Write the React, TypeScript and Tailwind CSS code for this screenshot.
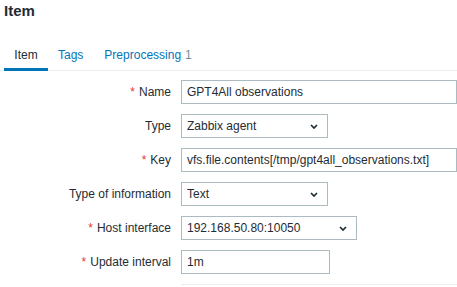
import React from 'react';

const Chevron = () => (
  <svg width="8" height="5" viewBox="0 0 8 5" className="shrink-0">
    <path d="M1 1l3 3 3-3" fill="none" stroke="#1f2c33" strokeWidth="1.7" />
  </svg>
);

const Label: React.FC<{ text: string; required?: boolean }> = ({ text, required }) => (
  <div className="w-[171px] shrink-0 text-right text-[12px] text-[#1f2c33]">
    {required && <span className="text-[#e33734] mr-[4px]">*</span>}
    {text}
  </div>
);

const Input: React.FC<{ value: string; width: string }> = ({ value, width }) => (
  <div className={`h-[24px] ${width} border border-[#acbbc2] bg-white flex items-center px-[5px] text-[12px] text-[#1f2c33] whitespace-nowrap`}>
    {value}
  </div>
);

const Select: React.FC<{ value: string; width: string }> = ({ value, width }) => (
  <div className={`h-[24px] ${width} border border-[#acbbc2] bg-white flex items-center justify-between pl-[5px] pr-[9px] text-[12px] text-[#1f2c33]`}>
    <span>{value}</span>
    <Chevron />
  </div>
);

const Row: React.FC<{ label: string; required?: boolean; children: React.ReactNode }> = ({ label, required, children }) => (
  <div className="flex items-center gap-[10px] h-[24px]">
    <Label text={label} required={required} />
    {children}
  </div>
);

export default function App() {
  return (
    <div className="w-[457px] h-[287px] overflow-hidden bg-white font-['Liberation_Sans',Arial,sans-serif]">
      <h1 className="pl-[4px] pt-[2px] text-[15px] font-bold text-[#1f2c33] leading-[18px]">Item</h1>
      <div className="mt-[26px] flex border-b border-[#ebeef0] h-[25px]">
        <div className="w-[44px] ml-[4px] text-center text-[12px] text-[#1f2c33] border-b-[3px] border-[#0275b8] -mb-[1px]">Item</div>
        <div className="ml-[10px] text-[12px] text-[#0275b8]">Tags</div>
        <div className="ml-[21px] text-[12px] text-[#0275b8]">
          Preprocessing<span className="text-[#768d99] ml-[4px]">1</span>
        </div>
      </div>
      <div className="pt-[9px] flex flex-col gap-[10px]">
        <Row label="Name" required>
          <Input value="GPT4All observations" width="w-[300px]" />
        </Row>
        <Row label="Type">
          <Select value="Zabbix agent" width="w-[147px]" />
        </Row>
        <Row label="Key" required>
          <Input value="vfs.file.contents[/tmp/gpt4all_observations.txt]" width="w-[300px]" />
        </Row>
        <Row label="Type of information">
          <Select value="Text" width="w-[147px]" />
        </Row>
        <Row label="Host interface" required>
          <Select value="192.168.50.80:10050" width="w-[176px]" />
        </Row>
        <Row label="Update interval" required>
          <Input value="1m" width="w-[149px]" />
        </Row>
        <div className="ml-[181px] border-t border-[#ebeef0] h-[4px]" />
      </div>
    </div>
  );
}
